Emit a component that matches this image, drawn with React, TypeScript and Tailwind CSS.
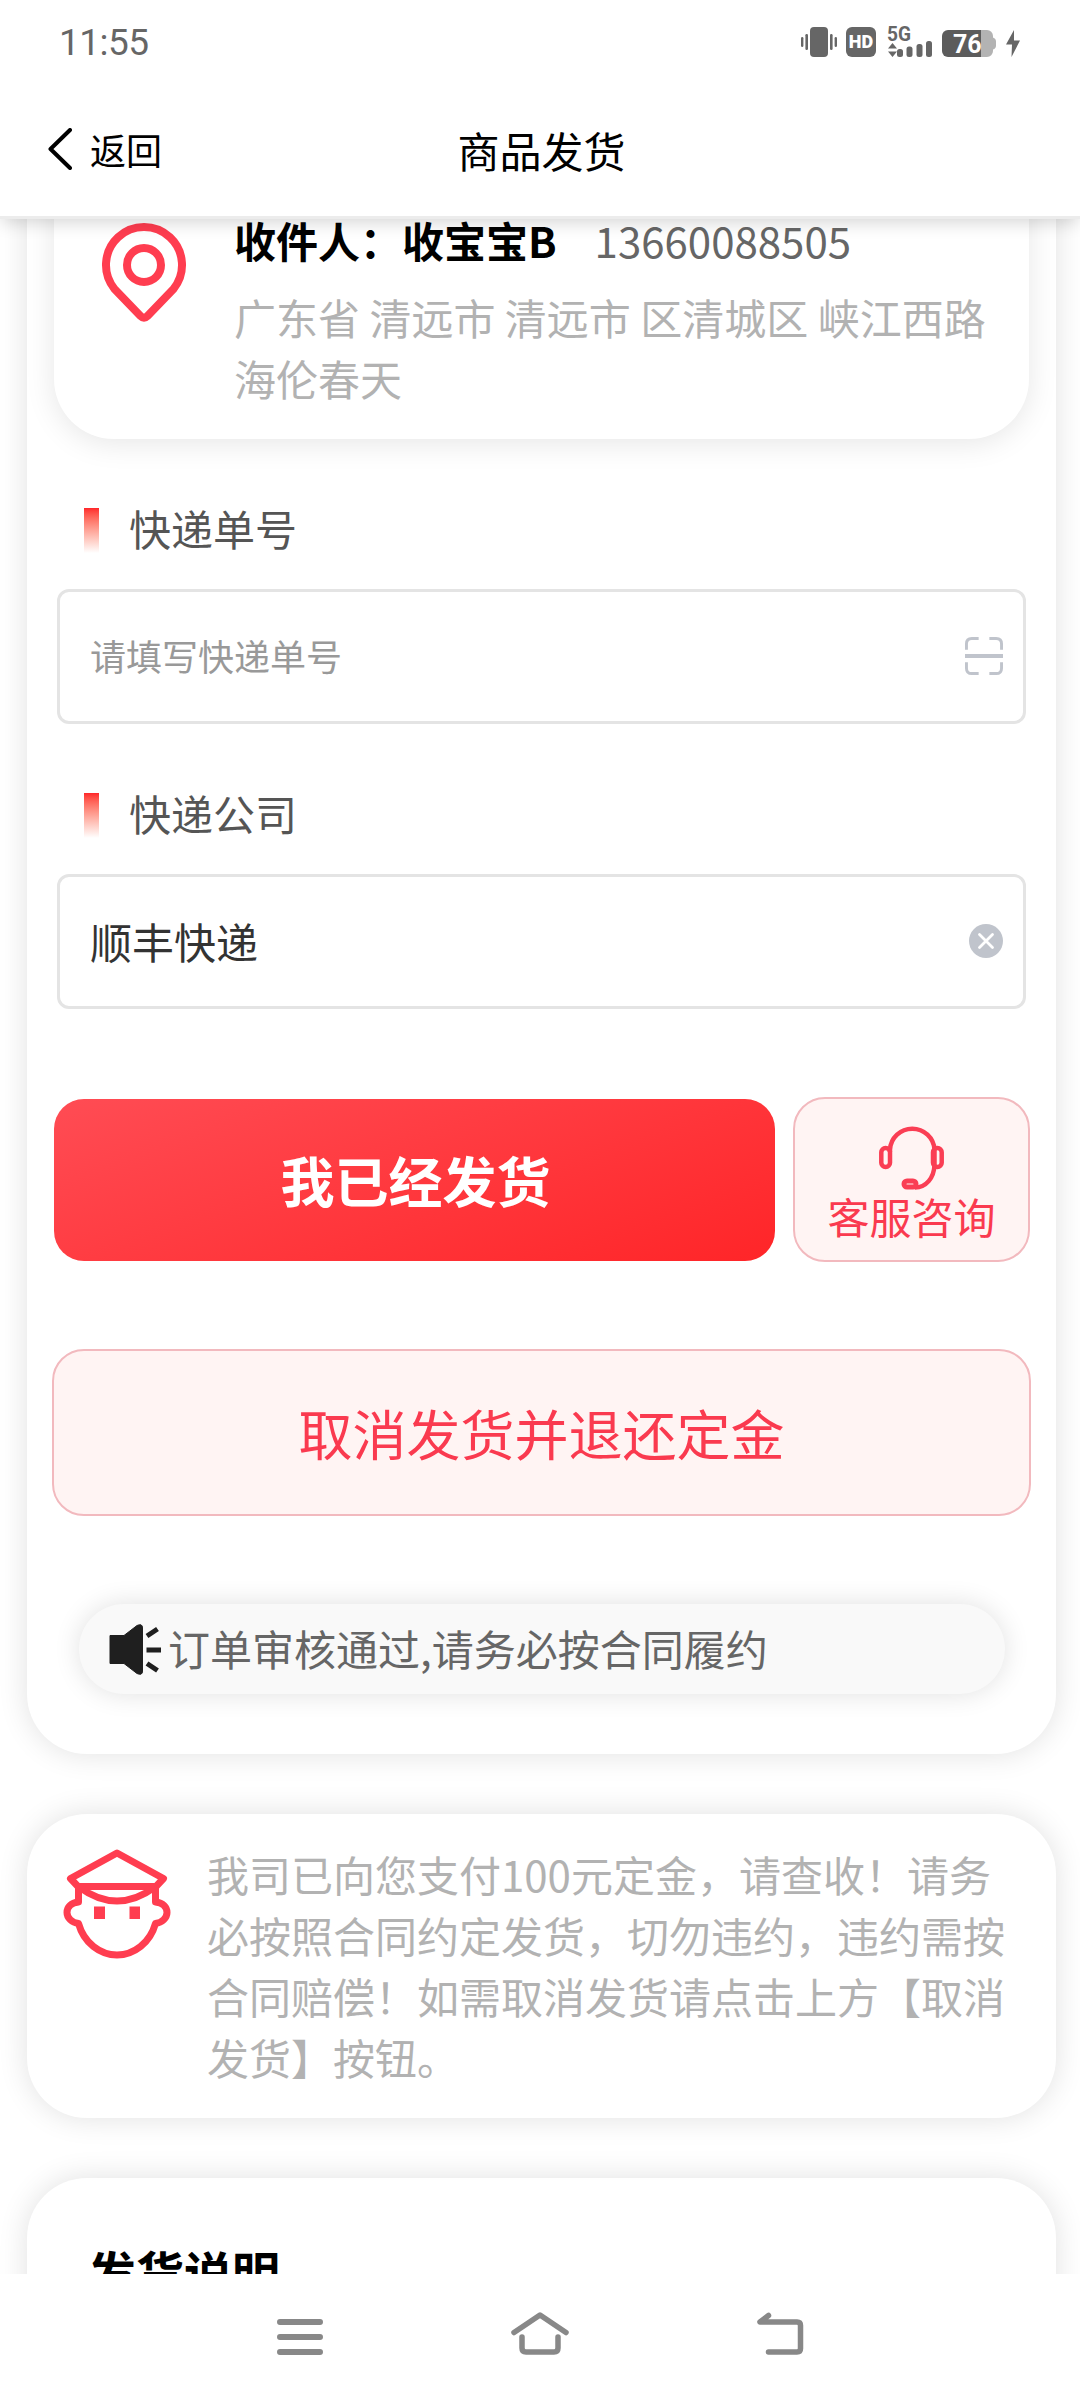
import type { ReactNode } from 'react';

function StatusBar() {
  return (
    <div className="flex h-[84px] items-start justify-between pl-[59px] pr-[60px] pt-[27px] text-[#666]">
      <span className="mt-[-3px] font-['Roboto'] text-[37px] leading-[38px] tracking-[-0.5px]">11:55</span>
      <div className="flex items-start">
        {/* Vibrate */}
        <svg className="h-[30px] w-9" viewBox="0 0 36 30" fill="currentColor">
          <rect x="9" y="0" width="18" height="30" rx="4" />
          <rect x="0" y="10" width="2.4" height="10" rx="1.2" />
          <rect x="4.4" y="7" width="2.6" height="16" rx="1.2" />
          <rect x="29" y="7" width="2.6" height="16" rx="1.2" />
          <rect x="33.6" y="10" width="2.4" height="10" rx="1.2" />
        </svg>
        <div className="ml-[9px] flex size-[30px] items-center justify-center rounded-md bg-[#666] font-['Roboto'] text-[18px] leading-none font-black text-white">
          HD
        </div>
        {/* Signal */}
        <svg className="ml-3 h-[30px] w-11 overflow-visible" viewBox="0 0 44 30" fill="currentColor">
          <text x="-1" y="14" fontFamily="Roboto" fontWeight="700" fontSize="19.5" textLength="24" lengthAdjust="spacingAndGlyphs">5G</text>
          <path d="M4.500 16 9 21.500H0ZM4.500 30 9 24.500H0Z" />
          <rect x="9" y="22" width="6" height="8" rx="2.500" />
          <rect x="18.500" y="19.500" width="6" height="10.500" rx="2.500" />
          <rect x="28.500" y="17" width="6" height="13" rx="2.500" />
          <rect x="38" y="14" width="6" height="16" rx="2.500" />
        </svg>
        {/* Battery */}
        <svg className="ml-[10px] mt-[3px] h-[27px] w-[54px] overflow-visible" viewBox="0 0 54 27">
          <path d="M39 0h6a6 6 0 0 1 6 6v1.500q3 1 3 4v4q0 3-3 4V21a6 6 0 0 1-6 6h-6Z" fill="#b3b3b3" />
          <path d="M6 0H39V27H6a6 6 0 0 1-6-6V6a6 6 0 0 1 6-6Z" fill="#5c5c5c" />
          <text x="11" y="23" fill="#fff" fontFamily="Roboto" fontWeight="700" fontSize="25">76</text>
        </svg>
        <svg className="ml-[10px] mt-[3px] h-[27px] w-[14px]" viewBox="0 0 14 27" fill="currentColor">
          <path d="M8 0 0 14.500h6L5.500 27 14 10.500H8Z" />
        </svg>
      </div>
    </div>
  );
}

function Header() {
  return (
    <header className="relative z-10 h-[219px] border-b-[3px] border-[#ececec] bg-white shadow-[0_6px_16px_-2px_rgba(0,0,0,0.16)]">
      <StatusBar />
      <div className="grid h-[132px] grid-cols-3 items-center pb-[2px] text-black">
        <button className="flex items-center pl-[48px] text-left text-[36px]">
          <svg className="-mt-px h-[42px] w-6" viewBox="0 0 24 42" fill="none" stroke="currentColor" strokeWidth="4" strokeLinecap="round" strokeLinejoin="round">
            <path d="M22 2 2.500 21 22 40" />
          </svg>
          <span className="ml-[18px]">返回</span>
        </button>
        <h1 className="pl-[3px] text-center text-[42px]">商品发货</h1>
      </div>
    </header>
  );
}

function Card({ className, children }: { className: string; children: ReactNode }) {
  return (
    <section className={`rounded-[60px] bg-white shadow-[0_0_30px_rgba(0,0,0,0.12)] ${className}`}>
      {children}
    </section>
  );
}

function FieldLabel({ text }: { text: string }) {
  return (
    <div className="mt-[59px] flex h-[60px] items-center pl-[30px]">
      <i className="mt-1 h-[45px] w-[15px] bg-linear-to-b from-[#ff2429] to-white" />
      <span className="ml-[30px] text-[42px] leading-[60px] text-[#555]">{text}</span>
    </div>
  );
}

function PinIcon() {
  return (
    <svg className="mt-3 h-[102px] w-[86px] shrink-0" viewBox="0 0 86 102" fill="none" stroke="#ff3d50" strokeWidth="8">
      <path d="M13.500 67A38 38 0 1 1 72.500 67L46.500 94Q43 97.500 39.500 94Z" strokeLinejoin="round" />
      <circle cx="43" cy="43" r="17" />
    </svg>
  );
}

function HeadsetIcon() {
  return (
    <svg className="size-[65px]" viewBox="0 0 65 65" fill="none" stroke="#fa3e54" strokeWidth="4.500">
      <rect x="2.300" y="23" width="8.700" height="19" rx="4.300" />
      <rect x="54" y="23" width="8.700" height="19" rx="4.300" />
      <path d="M11 27V24.500a22.300 22.300 0 0 1 44.500 0V40C55 53 47 62.500 36 62.500" />
      <rect x="25" y="56" width="12" height="6" rx="3" strokeWidth="5" />
    </svg>
  );
}

function SpeakerIcon() {
  return (
    <svg className="h-[51px] w-[52px]" viewBox="0 0 52 51" fill="#1f1f1f" stroke="#1f1f1f">
      <path d="M1 11.500H15L28 1.500Q33.500-1 33.500 4V47Q33.500 52 28 49.500L15 39.500H1Z" />
      <path d="M38 12 48.500 5M37.500 26H52M38 39.500 48.500 46.500" strokeWidth="5" />
    </svg>
  );
}

function OfficerIcon() {
  return (
    <svg className="h-[110px] w-[108px] shrink-0" viewBox="0 0 108 110" fill="none" stroke="#ff3d50" strokeWidth="7" strokeLinejoin="round">
      <path d="M54 4 100.500 29.500 93 37.500H15L7.500 29.500Z" />
      <path d="M16 38Q54 66 92 38" />
      <path d="M15.500 38V53C8 54 4 58 4 63.500S9 73.500 15.500 74.500C21 94 37 106 54 106S87 94 92.500 74.500C99 73.500 104 69 104 63.500S100 54 92.500 53V38" />
      <path d="M31 57.500h11V70H31ZM66.500 57.500H77V70H66.500Z" fill="#ff3d50" stroke="none" />
    </svg>
  );
}

function NavBar() {
  return (
    <nav className="flex h-[126px] items-start bg-white pl-[277px] pt-[37px]">
      <svg className="h-[46px] w-[46px]" viewBox="0 0 46 46" stroke="#888" strokeWidth="6" strokeLinecap="round">
        <path d="M3 11H43M3 26H43M3 41H43" />
      </svg>
      <svg className="ml-[187px] h-[46px] w-[60px]" viewBox="0 0 60 46" fill="none" stroke="#888" strokeWidth="5.500" strokeLinecap="round" strokeLinejoin="round">
        <path d="M4 21.500 30 4 56 21.500" />
        <path d="M12 26V37Q12 41 16 41H44Q48 41 48 37V26" />
      </svg>
      <svg className="ml-[186px] h-[46px] w-[50px]" viewBox="0 0 50 46" fill="none" stroke="#888" strokeWidth="5.500" strokeLinecap="round" strokeLinejoin="round">
        <path d="M12.500 4.500 4 11H41Q44.500 11 44.500 14.500V37.500Q44.500 41 41 41H12.500" />
      </svg>
    </nav>
  );
}

export default function App() {
  return (
    <div className="flex h-[2400px] w-[1080px] flex-col overflow-hidden bg-white font-['Noto_Sans_CJK_SC',sans-serif]">
      <Header />

      {/* Scrolled content */}
      <main className="h-[2055px] overflow-hidden pl-[27px] pr-6">
        <Card className="mt-[-143px] h-[1678px] px-[27px] pt-[30px]">
          <div className="flex h-[333px] rounded-[60px] bg-white pl-[47px] pt-[104px] shadow-[0_4px_30px_rgba(0,0,0,0.1)]">
            <PinIcon />
            <div className="ml-[47px] w-[770px]">
              <p className="flex text-[42px] leading-[60px]">
                <b className="text-black">收件人：收宝宝B</b>
                <span className="ml-[38px] text-[#666]">13660088505</span>
              </p>
              <p className="mt-[16px] text-[42px] leading-[61px] text-[#b2b2b2]">
                广东省 清远市 清远市 区清城区 峡江西路
                <br />
                海伦春天
              </p>
            </div>
          </div>

          <FieldLabel text="快递单号" />
          <div className="ml-[3px] mr-[3px] mt-[31px] flex h-[135px] items-center rounded-xl border-[3px] border-[#e4e4e4] pl-[30px] pr-5">
            <input className="min-w-0 flex-1 pb-[3px] text-[36px] placeholder:text-[#999]" placeholder="请填写快递单号" />
            <svg className="-mt-px size-[38px]" viewBox="0 0 39 39" fill="none" stroke="#c0c4cc" strokeWidth="3">
              <path d="M1.500 13V7Q1.500 1.500 7 1.500H14M25 1.500h7q5.500 0 5.500 5.500v6M37.500 26v6q0 5.500-5.500 5.500H25M14 37.500H7Q1.500 37.500 1.500 32V26" />
              <path d="M0 19.500H39" strokeWidth="4" />
            </svg>
          </div>

          <FieldLabel text="快递公司" />
          <div className="ml-[3px] mr-[3px] mt-[31px] flex h-[135px] items-center rounded-xl border-[3px] border-[#e4e4e4] pl-[30px] pr-5">
            <input className="min-w-0 flex-1 pb-[3px] text-[42px] text-[#333]" defaultValue="顺丰快递" />
            <svg className="-mt-px size-[34px]" viewBox="0 0 34 34">
              <circle cx="17" cy="17" r="17" fill="#c0c4cc" />
              <path d="M10.500 10.500 23.500 23.500M23.500 10.500 10.500 23.500" stroke="#fff" strokeWidth="2.800" strokeLinecap="round" />
            </svg>
          </div>

          <div className="mt-[88px] flex items-start">
            <button className="mt-[2px] h-[162px] w-[721px] shrink-0 rounded-[30px] bg-linear-[160deg] from-[#ff4c54] to-[#ff2528] pb-[2px] pl-[2px] text-[54px] font-bold text-white">
              我已经发货
            </button>
            <button className="ml-[18px] flex h-[165px] w-[237px] shrink-0 flex-col items-center rounded-[32px] border-2 border-[#f2b9be] bg-[#fff4f3] pt-[26px]">
              <HeadsetIcon />
              <span className="-mt-1 text-[42px] leading-[60px] text-[#fa3a4f]">客服咨询</span>
            </button>
          </div>

          <button className="-ml-[2px] mt-[87px] h-[167px] w-[979px] rounded-[32px] border-2 border-[#f2b9be] bg-[#fff4f3] text-[54px] text-[#fa3a4f]">
            取消发货并退还定金
          </button>

          <div className="ml-[25px] mt-[88px] flex h-[90px] w-[926px] items-center rounded-full bg-[#f9f9f9] pl-[30px] shadow-[0_0_27px_rgba(20,0,0,0.12)]">
            <SpeakerIcon />
            <span className="ml-[7px] text-[42px] leading-[87px] text-[#666] -mt-[3px]">订单审核通过,请务必按合同履约</span>
          </div>
        </Card>

        <Card className="mt-[60px] flex h-[304px] pl-9 pt-[35px]">
          <OfficerIcon />
          <p className="-mt-[6px] ml-9 w-[800px] text-[42px] leading-[61px] text-[#b2b2b2]">
            我司已向您支付100元定金，请查收！请务
            <br />
            必按照合同约定发货，切勿违约，违约需按
            <br />
            合同赔偿！如需取消发货请点击上方【取消
            <br />
            发货】按钮。
          </p>
        </Card>

        <Card className="mt-[60px] h-[400px] px-[61px] pt-[58px]">
          <h2 className="text-[48px] leading-[70px] font-bold text-black">发货说明</h2>
        </Card>
      </main>

      <NavBar />
    </div>
  );
}
